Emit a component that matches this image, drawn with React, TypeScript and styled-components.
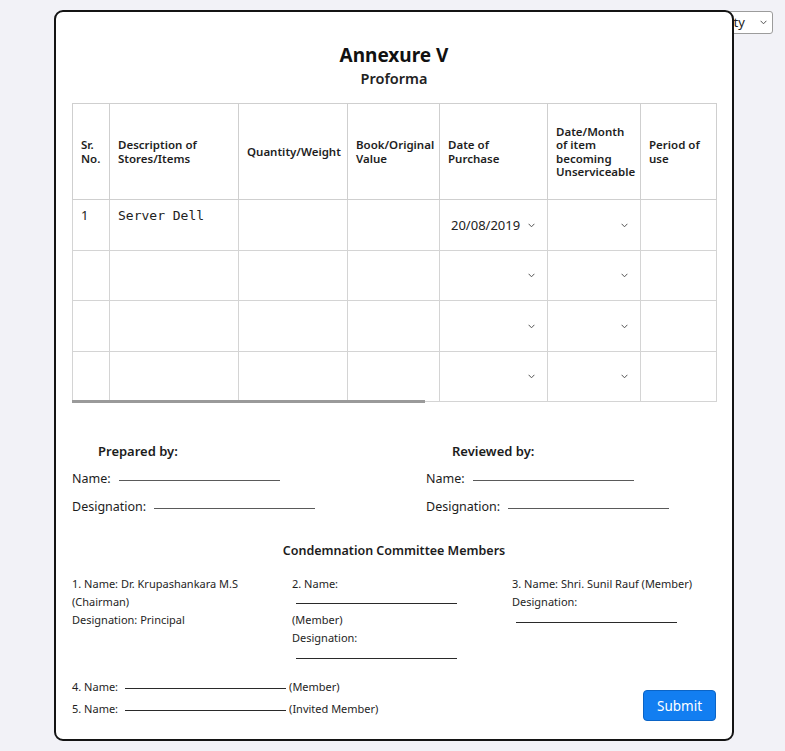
import React from "react";
import styled, { createGlobalStyle } from "styled-components";

const Global = createGlobalStyle`
  html, body { margin: 0; padding: 0; background: #f2f2f7; }
  body { font-family: "Noto Sans", "Open Sans", Arial, sans-serif; color: #1c1c1c; }
  * { box-sizing: border-box; }
`;

const Page = styled.div`
  padding: 10px 12px 10px 54px;
  min-height: 751px;
`;

const Toolbar = styled.div`
  display: flex;
  justify-content: flex-end;
  height: 23px;
  margin-bottom: -23px;
`;

const FilterWrap = styled.div`
  position: relative;
  width: 85px;
  height: 23px;
`;

const FilterSelect = styled.select`
  appearance: none;
  -webkit-appearance: none;
  width: 100%;
  height: 23px;
  font-family: "Noto Sans", sans-serif;
  font-size: 13px;
  color: #222;
  background: #fff;
  border: 1px solid #9c9c9c;
  border-radius: 3px;
  padding: 0 16px 0 3px;
  outline: none;
`;

const Card = styled.div`
  position: relative;
  width: 680px;
  background: #fff;
  border: 2px solid #141414;
  border-radius: 9px;
  padding: 16px 16px 19px;
`;

const Header = styled.div`
  margin-top: 15px;
  text-align: center;
`;

const Title = styled.h1`
  margin: 0;
  font-size: 19px;
  line-height: 24px;
  font-weight: 700;
  color: #111;
`;

const Subtitle = styled.h2`
  margin: 1px 0 0;
  font-size: 14.5px;
  line-height: 20px;
  font-weight: 600;
  color: #222;
`;

const TableBox = styled.div`
  margin-top: 15px;
  width: 644px;
`;

const Table = styled.table`
  border-collapse: collapse;
  table-layout: fixed;
  width: 644px;
`;

const Th = styled.th`
  border: 1px solid #cfcfcf;
  height: 96px;
  padding: 0 8px;
  text-align: left;
  vertical-align: middle;
  font-size: 11.5px;
  line-height: 13.5px;
  font-weight: 600;
  color: #1e1e1e;
  &:first-child + th { border-left-color: #bdbdbd; }
`;

const Td = styled.td<{ $middle?: boolean }>`
  border: 1px solid #d4d4d4;
  height: 50.5px;
  padding: ${(p) => (p.$middle ? "0 8px" : "7px 8px")};
  vertical-align: ${(p) => (p.$middle ? "middle" : "top")};
  font-size: 13px;
  line-height: 16px;
  color: #222;
`;

const ScrollTrack = styled.div`
  height: 3px;
  margin-top: -2px;
  position: relative;
`;

const ScrollThumb = styled.div`
  height: 3px;
  background: #9a9a9a;
`;

const CellText = styled.textarea`
  display: block;
  width: 100%;
  height: 34px;
  border: none;
  outline: none;
  resize: none;
  padding: 0;
  margin: 0;
  background: transparent;
  font-family: "DejaVu Sans Mono", "Liberation Mono", monospace;
  font-size: 13px;
  line-height: 17px;
  color: #222;
  overflow: hidden;
`;

const SelectWrap = styled.div`
  position: relative;
  width: 100%;
`;

const CellSelect = styled.select`
  appearance: none;
  -webkit-appearance: none;
  width: 100%;
  height: 24px;
  border: none;
  outline: none;
  background: transparent;
  padding: 0 14px 0 3px;
  font-family: "Noto Sans", sans-serif;
  font-size: 13px;
  color: #222;
`;

const Chevron = styled.svg<{ $right?: number }>`
  position: absolute;
  right: ${(p) => p.$right ?? 4}px;
  top: 50%;
  margin-top: -2px;
  width: 7px;
  height: 5px;
  pointer-events: none;
`;

const Signatures = styled.div`
  margin-top: 38px;
  display: grid;
  grid-template-columns: 354px 1fr;
`;

const SigColumn = styled.div`
  display: flex;
  flex-direction: column;
  gap: 8px;
`;

const SigHeading = styled.div`
  margin-left: 26px;
  font-size: 13px;
  line-height: 20px;
  font-weight: 600;
  color: #1c1c1c;
`;

const FieldRow = styled.div`
  font-size: 12.5px;
  line-height: 20px;
  color: #1c1c1c;
`;

const Blank = styled.span<{ $w?: number; $gap?: number; $dark?: boolean }>`
  display: inline-block;
  width: ${(p) => p.$w ?? 161}px;
  margin-left: ${(p) => p.$gap ?? 8}px;
  margin-right: 3px;
  border-bottom: 1px solid ${(p) => (p.$dark ? "#2a2a2a" : "#5a5a5a")};
  vertical-align: baseline;
  position: relative;
  top: -2px;
`;

const SectionTitle = styled.div`
  margin-top: 24px;
  text-align: center;
  font-size: 12.5px;
  line-height: 20px;
  font-weight: 600;
  color: #1c1c1c;
`;

const Members = styled.div`
  margin-top: 14px;
  display: grid;
  grid-template-columns: 220px 220px 1fr;
`;

const Member = styled.div`
  font-size: 11px;
  line-height: 18px;
  color: #1e1e1e;
`;

const LineBlank = styled.div`
  width: 161px;
  height: 11px;
  margin: 0 0 7px 4px;
  border-bottom: 1px solid #2a2a2a;
`;

const LineBlankEnd = styled(LineBlank)`
  height: 12px;
  margin-bottom: 0;
`;

const Footer = styled.div`
  margin-top: 17px;
  display: flex;
  justify-content: space-between;
  align-items: flex-end;
`;

const FooterLines = styled.div`
  font-size: 11px;
  line-height: 22px;
  color: #1e1e1e;
`;

const SubmitButton = styled.button`
  width: 73px;
  height: 31px;
  margin-bottom: -1px;
  background: #127ef1;
  border: 1px solid #0b64c6;
  border-radius: 4px;
  color: #fff;
  font-family: "Noto Sans", sans-serif;
  font-size: 13.5px;
  cursor: pointer;
`;

const columns: { label: React.ReactNode; w: number }[] = [
  { label: <>Sr.<br />No.</>, w: 37 },
  { label: <>Description of<br />Stores/Items</>, w: 129 },
  { label: "Quantity/Weight", w: 109 },
  { label: <>Book/Original<br />Value</>, w: 92 },
  { label: <>Date of<br />Purchase</>, w: 108 },
  { label: <>Date/Month<br />of item<br />becoming<br />Unserviceable</>, w: 93 },
  { label: <>Period of<br />use</>, w: 76 },
];

const rows = [
  { sr: "1", desc: "Server Dell", date: "20/08/2019" },
  { sr: "", desc: "", date: "" },
  { sr: "", desc: "", date: "" },
  { sr: "", desc: "", date: "" },
];

const visibleShare = 353 / 644;

function ChevronIcon({ right }: { right?: number }) {
  return (
    <Chevron $right={right} viewBox="0 0 7 5">
      <path d="M0.6 0.8 L3.5 3.8 L6.4 0.8" fill="none" stroke="#555" strokeWidth="1" />
    </Chevron>
  );
}

function DateSelect({ value }: { value: string }) {
  return (
    <SelectWrap>
      <CellSelect defaultValue={value}>
        <option value="">{""}</option>
        {value && <option value={value}>{value}</option>}
      </CellSelect>
      <ChevronIcon />
    </SelectWrap>
  );
}

export default function App() {
  return (
    <>
      <Global />
      <Page>
        <Toolbar>
          <FilterWrap>
            <FilterSelect defaultValue="Quantity">
              <option>Quantity</option>
              <option>Value</option>
            </FilterSelect>
            <ChevronIcon right={6} />
          </FilterWrap>
        </Toolbar>
        <Card>
          <Header>
            <Title>Annexure V</Title>
            <Subtitle>Proforma</Subtitle>
          </Header>

          <TableBox>
            <Table>
              <colgroup>
                {columns.map((c, i) => (
                  <col key={i} style={{ width: c.w }} />
                ))}
              </colgroup>
              <thead>
                <tr>
                  {columns.map((c, i) => (
                    <Th key={i}>{c.label}</Th>
                  ))}
                </tr>
              </thead>
              <tbody>
                {rows.map((r, i) => (
                  <tr key={i}>
                    <Td>{r.sr}</Td>
                    <Td>
                      <CellText defaultValue={r.desc} />
                    </Td>
                    <Td />
                    <Td />
                    <Td $middle>
                      <DateSelect value={r.date} />
                    </Td>
                    <Td $middle>
                      <DateSelect value="" />
                    </Td>
                    <Td />
                  </tr>
                ))}
              </tbody>
            </Table>
            <ScrollTrack>
              <ScrollThumb style={{ width: `${visibleShare * 100}%` }} />
            </ScrollTrack>
          </TableBox>

          <Signatures>
            <SigColumn>
              <SigHeading>Prepared by:</SigHeading>
              <FieldRow>
                Name:<Blank />
              </FieldRow>
              <FieldRow>
                Designation:<Blank />
              </FieldRow>
            </SigColumn>
            <SigColumn>
              <SigHeading>Reviewed by:</SigHeading>
              <FieldRow>
                Name:<Blank />
              </FieldRow>
              <FieldRow>
                Designation:<Blank />
              </FieldRow>
            </SigColumn>
          </Signatures>

          <SectionTitle>Condemnation Committee Members</SectionTitle>

          <Members>
            <Member>
              <div>1. Name: Dr. Krupashankara M.S</div>
              <div>(Chairman)</div>
              <div>Designation: Principal</div>
            </Member>
            <Member>
              <div>2. Name:</div>
              <LineBlank />
              <div>(Member)</div>
              <div>Designation:</div>
              <LineBlankEnd />
            </Member>
            <Member>
              <div>3. Name: Shri. Sunil Rauf (Member)</div>
              <div>Designation:</div>
              <LineBlankEnd />
            </Member>
          </Members>

          <Footer>
            <FooterLines>
              <div>
                4. Name:<Blank $gap={7} $dark />(Member)
              </div>
              <div>
                5. Name:<Blank $gap={7} $dark />(Invited Member)
              </div>
            </FooterLines>
            <SubmitButton type="button">Submit</SubmitButton>
          </Footer>
        </Card>
      </Page>
    </>
  );
}
